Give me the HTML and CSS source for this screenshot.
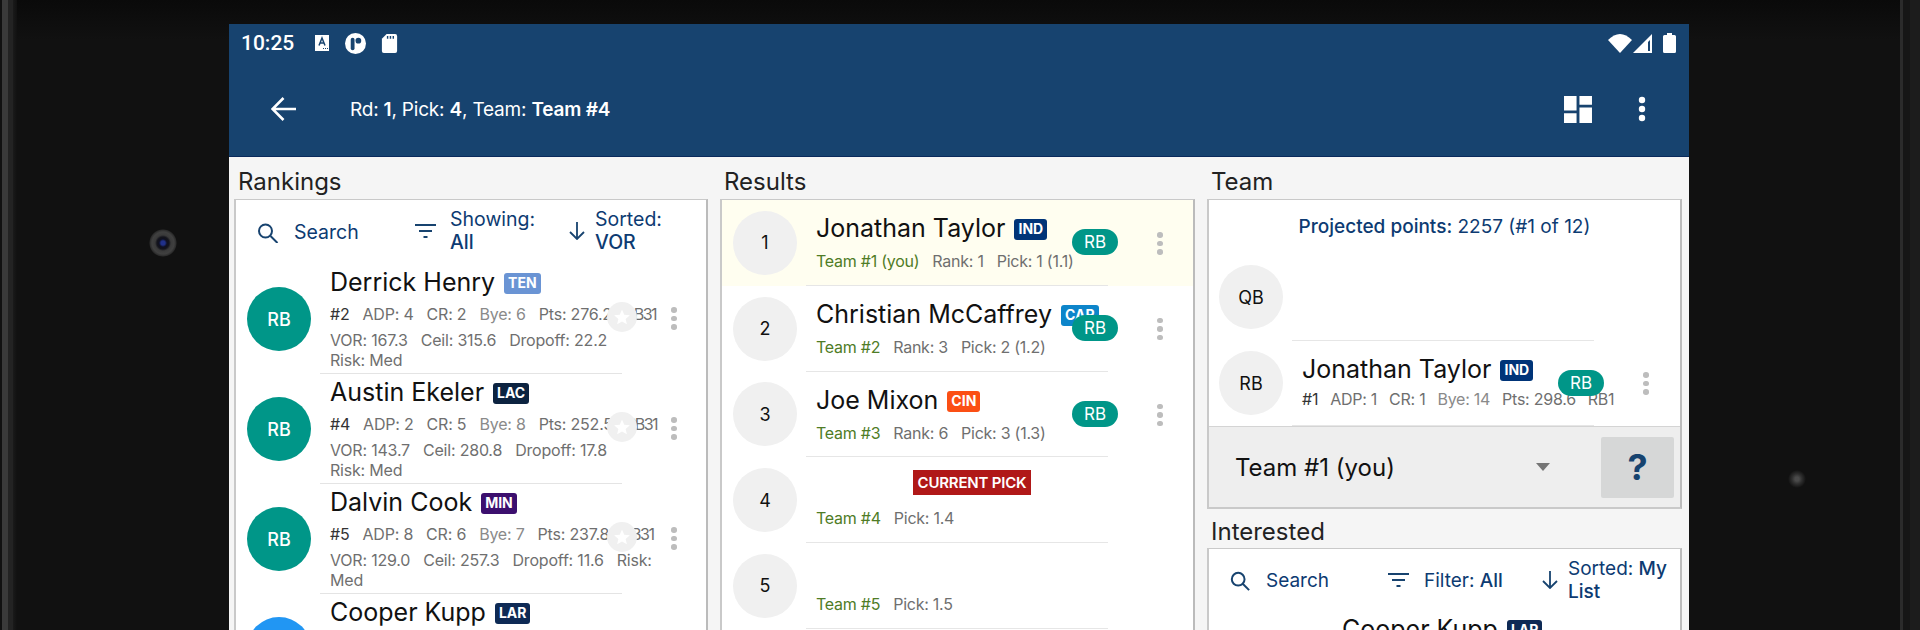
FILE: index.html
```html
<!DOCTYPE html>
<html lang="en">
<head>
<meta charset="utf-8">
<title>Draft</title>
<link rel="stylesheet" href="styles.css">
</head>
<body>
<div class="device">
  <div class="bezel-edge left"></div>
  <div class="bezel-edge right"></div>
  <div class="camera"></div>
  <div class="sensor"></div>
  <div class="screen">
    <header class="appbar">
      <div class="status">
        <span class="time">10:25</span>
        <svg class="st-a" width="14" height="16" viewBox="0 0 14 16"><rect width="14" height="16" fill="#fff"/><path d="M4 10.500 7 3l3 7.500M5 8h4" fill="none" stroke="#17436f" stroke-width="1.500"/><path d="M8 13.500h1M10 13.500h1M12 13.500h1" stroke="#17436f"/></svg>
        <svg class="st-p" width="21" height="21" viewBox="0 0 22 22"><circle cx="11" cy="11" r="11" fill="#fff"/><rect x="6" y="5" width="4" height="13" rx="2" fill="#17436f"/><circle cx="14" cy="8" r="3" fill="#17436f"/></svg>
        <svg class="st-sd" width="17" height="19" viewBox="0 0 16 20"><path d="M5 0h9a2 2 0 0 1 2 2v16a2 2 0 0 1-2 2H2a2 2 0 0 1-2-2V5z" fill="#fff"/><path d="M6 2v3M9 2v3M12 2v3" stroke="#17436f" stroke-width="1.500"/></svg>
        <span class="grow"></span>
        <svg class="st-wifi" width="24" height="19" viewBox="0 0 24 19"><path d="M0 6Q12-6 24 6L12 19z" fill="#fff"/></svg>
        <svg class="st-sig" width="19" height="19" viewBox="0 0 19 19"><path d="M19 0v19H0z" fill="#fff"/><path d="M15 8v9h2V6z" fill="#17436f"/></svg>
        <svg class="st-bat" width="13" height="20" viewBox="0 0 13 20"><path d="M4 0h5v2h2.500A1.500 1.500 0 0 1 13 3.500v15a1.500 1.500 0 0 1-1.500 1.500h-10A1.500 1.500 0 0 1 0 18.500v-15A1.500 1.500 0 0 1 1.500 2H4z" fill="#fff"/></svg>
      </div>
      <div class="toolbar">
        <svg class="back" width="26" height="24" viewBox="0 0 26 24"><path d="M25 12H2M12.500 1 1.500 12l11 11" fill="none" stroke="#fff" stroke-width="2.600"/></svg>
        <div class="title">Rd: <b>1</b>, Pick: <b>4</b>, Team: <b>Team #4</b></div>
        <svg class="dash" width="28" height="27" viewBox="0 0 29 28"><path d="M0 0h13v15H0zM0 18h13v10H0zM16 0h13v9H16zM16 12h13v16H16z" fill="#fff"/></svg>
        <svg class="appdots" width="8" height="26" viewBox="0 0 8 26"><circle cx="4" cy="4" r="3.200" fill="#fff"/><circle cx="4" cy="13" r="3.200" fill="#fff"/><circle cx="4" cy="22" r="3.200" fill="#fff"/></svg>
      </div>
    </header>
    <main class="columns">
      <section class="col">
        <h2 class="label">Rankings</h2>
        <div class="card">
          <div class="filters">
            <div class="f f-search"><svg width="22" height="20" viewBox="0 0 22 20"><circle cx="8.500" cy="8" r="6.500" fill="none" stroke="#17436f" stroke-width="2"/><path d="m13.500 13 7 7" stroke="#17436f" stroke-width="2"/></svg><span>Search</span></div>
            <div class="f f-show"><svg width="21" height="15" viewBox="0 0 21 15"><path d="M0 1h21M4 7h13M8.500 13h4" stroke="#17436f" stroke-width="2"/></svg><span>Showing:<br><b>All</b></span></div>
            <div class="f f-sort"><svg width="16" height="18" viewBox="0 0 16 18"><path d="M8 0v17M1 10l7 7 7-7" fill="none" stroke="#17436f" stroke-width="1.800"/></svg><span>Sorted:<br><b>VOR</b></span></div>
          </div>
          <article class="rank">
            <div class="ava teal">RB</div>
            <div class="rtext">
              <div class="name">Derrick Henry <em class="tag ten">TEN</em></div>
              <div class="stats first"><strong>#2</strong><span>ADP: 4</span><span>CR: 2</span><span class="lt">Bye: 6</span><span>Pts: 276.2</span><span class="rk">RB31</span></div>
              <div class="stats second"><span>VOR: 167.3</span><span>Ceil: 315.6</span><span>Dropoff: 22.2</span></div>
              <div class="stats third"><span>Risk: Med</span></div>
            </div>
            <div class="star"><svg width="18" height="18" viewBox="0 0 24 24"><path d="m12 2 3 7 7.500.6-5.700 4.900 1.700 7.300L12 18l-6.500 3.800 1.700-7.300L1.500 9.600 9 9z" fill="#fff"/></svg></div>
            <div class="dots"><i></i><i></i><i></i></div>
          </article>
          <article class="rank">
            <div class="ava teal">RB</div>
            <div class="rtext">
              <div class="name">Austin Ekeler <em class="tag lac">LAC</em></div>
              <div class="stats first"><strong>#4</strong><span>ADP: 2</span><span>CR: 5</span><span class="lt">Bye: 8</span><span>Pts: 252.5</span><span class="rk">RB31</span></div>
              <div class="stats second"><span>VOR: 143.7</span><span>Ceil: 280.8</span><span>Dropoff: 17.8</span></div>
              <div class="stats third"><span>Risk: Med</span></div>
            </div>
            <div class="star"><svg width="18" height="18" viewBox="0 0 24 24"><path d="m12 2 3 7 7.500.6-5.700 4.900 1.700 7.300L12 18l-6.500 3.800 1.700-7.300L1.500 9.600 9 9z" fill="#fff"/></svg></div>
            <div class="dots"><i></i><i></i><i></i></div>
          </article>
          <article class="rank">
            <div class="ava teal">RB</div>
            <div class="rtext">
              <div class="name">Dalvin Cook <em class="tag min">MIN</em></div>
              <div class="stats first"><strong>#5</strong><span>ADP: 8</span><span>CR: 6</span><span class="lt">Bye: 7</span><span>Pts: 237.8</span><span class="rk">RB31</span></div>
              <div class="stats second"><span>VOR: 129.0</span><span>Ceil: 257.3</span><span>Dropoff: 11.6</span><span>Risk:</span></div>
              <div class="stats third"><span>Med</span></div>
            </div>
            <div class="star"><svg width="18" height="18" viewBox="0 0 24 24"><path d="m12 2 3 7 7.500.6-5.700 4.900 1.700 7.300L12 18l-6.500 3.800 1.700-7.300L1.500 9.600 9 9z" fill="#fff"/></svg></div>
            <div class="dots"><i></i><i></i><i></i></div>
          </article>
          <article class="rank">
            <div class="ava blue"></div>
            <div class="rtext">
              <div class="name">Cooper Kupp <em class="tag lar">LAR</em></div>
            </div>
          </article>
        </div>
      </section>
      <section class="col">
        <h2 class="label">Results</h2>
        <div class="card">
          <article class="res hl">
            <div class="ava grey">1</div>
            <div class="rest">
              <div class="name">Jonathan Taylor <em class="tag ind">IND</em></div>
              <div class="sub"><span class="team">Team #1 (you)</span><span>Rank: 1</span><span>Pick: 1 (1.1)</span></div>
            </div>
            <div class="pill">RB</div>
            <div class="dots"><i></i><i></i><i></i></div>
          </article>
          <article class="res">
            <div class="ava grey">2</div>
            <div class="rest">
              <div class="name">Christian McCaffrey <em class="tag car">CAR</em></div>
              <div class="sub"><span class="team">Team #2</span><span>Rank: 3</span><span>Pick: 2 (1.2)</span></div>
            </div>
            <div class="pill">RB</div>
            <div class="dots"><i></i><i></i><i></i></div>
          </article>
          <article class="res">
            <div class="ava grey">3</div>
            <div class="rest">
              <div class="name">Joe Mixon <em class="tag cin">CIN</em></div>
              <div class="sub"><span class="team">Team #3</span><span>Rank: 6</span><span>Pick: 3 (1.3)</span></div>
            </div>
            <div class="pill">RB</div>
            <div class="dots"><i></i><i></i><i></i></div>
          </article>
          <article class="res">
            <div class="ava grey">4</div>
            <div class="rest">
              <div class="name center"><em class="current">CURRENT PICK</em></div>
              <div class="sub"><span class="team">Team #4</span><span>Pick: 1.4</span></div>
            </div>
          </article>
          <article class="res">
            <div class="ava grey">5</div>
            <div class="rest">
              <div class="name"></div>
              <div class="sub"><span class="team">Team #5</span><span>Pick: 1.5</span></div>
            </div>
          </article>
        </div>
      </section>
      <section class="col">
        <h2 class="label">Team</h2>
        <div class="card teamcard">
          <div class="proj"><b>Projected points:</b> 2257 (#1 of 12)</div>
          <article class="res qb">
            <div class="ava grey">QB</div>
            <div class="rest"></div>
          </article>
          <article class="res last">
            <div class="ava grey">RB</div>
            <div class="rest">
              <div class="name">Jonathan Taylor <em class="tag ind">IND</em></div>
              <div class="sub"><strong>#1</strong><span>ADP: 1</span><span>CR: 1</span><span class="lt">Bye: 14</span><span>Pts: 298.6</span><span>RB1</span></div>
            </div>
            <div class="pill">RB</div>
            <div class="dots"><i></i><i></i><i></i></div>
          </article>
          <div class="picker">
            <span class="pick-name">Team #1 (you)</span>
            <span class="caret"></span>
            <span class="help">?</span>
          </div>
        </div>
        <h2 class="label second-label">Interested</h2>
        <div class="card intcard">
          <div class="filters small">
            <div class="f i-search"><svg width="20" height="20" viewBox="0 0 22 22"><circle cx="9" cy="9" r="7" fill="none" stroke="#17436f" stroke-width="2.200"/><path d="m14 14 7 7" stroke="#17436f" stroke-width="2.200"/></svg><span>Search</span></div>
            <div class="f i-filter"><svg width="21" height="15" viewBox="0 0 21 15"><path d="M0 1h21M4 7h13M8.500 13h4" stroke="#17436f" stroke-width="2"/></svg><span>Filter: <b>All</b></span></div>
            <div class="f i-sort"><svg width="16" height="18" viewBox="0 0 16 18"><path d="M8 0v17M1 10l7 7 7-7" fill="none" stroke="#17436f" stroke-width="1.800"/></svg><span>Sorted: <b>My<br>List</b></span></div>
          </div>
          <div class="int-name"><div class="name">Cooper Kupp <em class="tag lar">LAR</em></div></div>
        </div>
      </section>
    </main>
  </div>
</div>
</body>
</html>
```
FILE: styles.css
```css
* { box-sizing: border-box; }
html, body { margin: 0; height: 630px; overflow: hidden; }
body { background: #111; font-family: Inter, "Noto Sans", sans-serif; color: #111; }
.device { position: relative; height: 630px; padding: 24px 0 0 229px; background: linear-gradient(#0a0a0a 0, #111 40px); }
.bezel-edge { position: absolute; top: 0; bottom: 0; }
.bezel-edge.left { left: 0; width: 17px; background: linear-gradient(90deg, #111 0 2px, #3a3a3a 2px 8px, #232323 8px 13px, #1a1a1a 13px, #111 17px); }
.bezel-edge.right { right: 0; width: 20px; background: linear-gradient(90deg, #2b2b2b 0 3px, #161616 3px 10px, #1c1c1c 10px); }
.camera { position: absolute; left: 149px; top: 229px; width: 28px; height: 28px; border-radius: 50%; background: radial-gradient(circle, #20308a 0 2px, #0f1020 4px, #14141c 6px, #3a3a3a 8px, #404040 11px, #2c2c2c 13px, #111 14px); }
.sensor { position: absolute; left: 1788px; top: 470px; width: 18px; height: 18px; border-radius: 50%; background: radial-gradient(circle, #4a4a4a 0 2px, #2e2e2e 5px, #111 9px); }
.screen { width: 1460px; height: 606px; background: #f5f5f5; overflow: hidden; display: flex; flex-direction: column; }
.appbar { height: 133px; flex: none; background: #17436f; border-bottom: 1px solid #0a2a5c; color: #fff; }
.status { height: 38px; display: flex; align-items: center; padding: 0 13px 0 12px; }
.time { font: 500 21px Roboto, sans-serif; margin-right: 21px; }
.st-p { margin-left: 16px; }
.st-sd { margin-left: 15px; }
.st-sig { margin-left: 1px; }
.st-bat { margin-left: 11px; }
.grow { flex: 1; }
.toolbar { height: 94px; display: flex; align-items: center; padding: 0 0 0 42px; }
.back { flex: none; }
.title { font-size: 19px; margin-left: 53px; flex: 1; letter-spacing: -.2px; }
.title b { font-weight: 600; }
.dash { flex: none; margin-right: 46px; }
.appdots { flex: none; margin-right: 43px; }
.columns { flex: 1; min-height: 0; display: grid; grid-template-columns: 474px 475px 475px; gap: 12px; padding: 0 0 0 5px; }
.col { min-width: 0; display: flex; flex-direction: column; }
.label { font-size: 24px; font-weight: 400; margin: 0; height: 42px; line-height: 50px; padding-left: 4px; color: #222; white-space: nowrap; flex: none; }
.card { flex: 1; background: #fff; border: 2px solid #c9c9c9; border-top-width: 1px; border-right-color: #bbb; overflow: hidden; }
.filters { position: relative; height: 72px; color: #0d3b72; font-size: 19.500px; }
.f { position: absolute; display: flex; align-items: center; line-height: 23px; white-space: nowrap; }
.f b { font-weight: 500; }
.f-search { left: 21px; top: 21px; gap: 15px; }
.f-show { left: 179px; top: 8px; height: 46px; gap: 14px; }
.f-sort { left: 333px; top: 8px; height: 46px; gap: 10px; }
.rank { position: relative; height: 110px; display: flex; margin-top: -8px; margin-bottom: 8px; }
.ava { flex: none; width: 64px; height: 64px; border-radius: 50%; display: flex; align-items: center; justify-content: center; font-size: 18px; }
.teal { background: #009688; color: #fff; font-weight: 500; }
.blue { background: #2196f3; color: #fff; }
.grey { background: #f0f0f0; color: #111; }
.rank .ava { margin: 23px 0 0 11px; }
.rtext { position: relative; margin-left: 19px; width: 352px; height: 100%; padding-top: 3px; }
.rank .rtext::after { content: ""; position: absolute; left: -10px; bottom: 0; border-bottom: 1px solid #e4e4e4; width: 302px; }
.rank:last-child .rtext::after { display: none; }
.name { font-size: 25px; line-height: 30px; height: 30px; white-space: nowrap; display: flex; align-items: center; gap: 9px; }
.tag { font: 700 14px/20px Inter, sans-serif; color: #fff; padding: 0 4px; border-radius: 3px; height: 21px; margin-top: 3px; }
.ten { background: #6a94d4; }
.lac { background: #0c2340; }
.min { background: #3c0f6e; }
.lar { background: #0e2a55; }
.ind { background: #003478; }
.car { background: #0d85ca; }
.cin { background: #fb4f14; }
.stats { display: flex; gap: 13px; font-size: 16px; color: #6f6f6f; white-space: nowrap; letter-spacing: -.2px; }
.stats strong, .sub strong { font-weight: 400; color: #333; }
.lt { color: #8a8a8a; }
.rk { letter-spacing: -1.500px; }
.first { margin-top: 7px; line-height: 20px; }
.second { margin-top: 6px; line-height: 20px; }
.third { margin-top: 0; line-height: 20px; }
.star { position: absolute; left: 371px; top: 38px; width: 30px; height: 30px; border-radius: 50%; background: #f0f0f0; display: flex; align-items: center; justify-content: center; }
.dots { position: absolute; display: flex; flex-direction: column; gap: 3px; }
.dots i { width: 5.500px; height: 5.500px; border-radius: 50%; background: #bdbdbd; }
.rank .dots { left: 435px; top: 43px; }
.res { position: relative; height: 85.750px; display: flex; align-items: center; }
.res .ava { margin-left: 11px; }
.rest { position: relative; margin-left: 19px; height: 100%; flex: 1; padding-top: 13px; }
.res::after { content: ""; position: absolute; left: 84px; width: 302px; bottom: 0; border-bottom: 1px solid #e6e6e6; }
.hl { background: #fffef0; }
.sub { display: flex; gap: 13px; margin-top: 8px; font-size: 16px; line-height: 20px; color: #6f6f6f; white-space: nowrap; letter-spacing: -.25px; }
.team { color: #4f7c26; }
.pill { position: absolute; left: 350px; top: 29px; width: 46px; height: 26px; border-radius: 13px; background: #009688; color: #fff; font-size: 17px; line-height: 26px; text-align: center; }
.res .dots { left: 435px; top: 32px; }
.center { justify-content: center; width: 302px; margin-left: 5px; }
.current { font: 600 15px/25px Inter, sans-serif; background: #b01818; color: #fff; padding: 0 5px; margin-top: -5px; font-style: normal; letter-spacing: -.2px; }
.tag { font-style: normal; }
.teamcard { flex: none; height: 310px; display: flex; flex-direction: column; }
.proj { flex: none; text-align: center; color: #0d3b72; font-size: 19px; line-height: 22px; height: 65px; padding-top: 16px; }
.proj b { font-weight: 500; }
.teamcard .res { margin-left: -1px; }
.qb { flex: none; height: 76px; align-items: flex-start; }
.last { flex: none; height: 85px; align-items: flex-start; }
.last .ava { margin-top: 10px; }
.last .sub { gap: 12px; margin-top: 5px; }
.last .dots { top: 31px; }
.picker { flex: none; height: 81px; background: #eee; border-top: 1px solid #d4d4d4; display: flex; align-items: center; padding: 0 6px 0 26px; }
.pick-name { font-size: 24px; flex: 1; }
.caret { width: 0; height: 0; border: 7px solid transparent; border-top: 8px solid #757575; border-bottom: 0; margin-right: 51px; }
.help { width: 73px; height: 61px; border-radius: 2px; background: #d6d7d7; color: #17436f; font: 700 36px/61px Inter, sans-serif; text-align: center; }
.second-label { height: 39px; line-height: 45px; }
.intcard { flex: 1; }
.small { height: 65px; font-size: 19px; }
.i-search { left: 21px; top: 20px; gap: 16px; }
.i-filter { left: 179px; top: 20px; gap: 15px; }
.i-sort { left: 333px; top: 8px; gap: 10px; }
.int-name { padding-left: 133px; }
```
